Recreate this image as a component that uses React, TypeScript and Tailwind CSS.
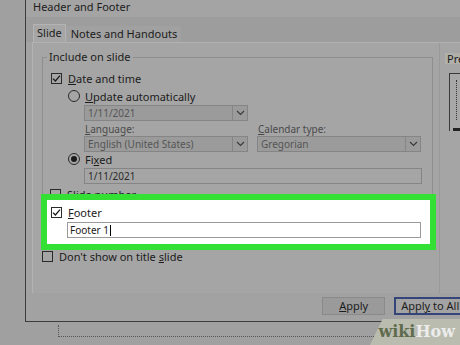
import React from "react";

const font = { fontFamily: '"Noto Sans", "Open Sans", sans-serif' };

function Check({ checked }: { checked?: boolean }) {
  return (
    <div className="w-[11px] h-[11px] border border-[#2a2a2a] bg-transparent flex items-center justify-center shrink-0">
      {checked && (
        <svg width="9" height="9" viewBox="0 0 9 9">
          <path d="M1 4.6 L3.4 7 L8 1.6" stroke="#1a1a1a" strokeWidth="1.3" fill="none" />
        </svg>
      )}
    </div>
  );
}

function Radio({ on }: { on?: boolean }) {
  return (
    <div className="w-[12px] h-[12px] rounded-full border border-[#2a2a2a] flex items-center justify-center shrink-0">
      {on && <div className="w-[6px] h-[6px] rounded-full bg-[#1a1a1a]" />}
    </div>
  );
}

function Chevron() {
  return (
    <svg width="9" height="6" viewBox="0 0 9 6">
      <path d="M1 1 L4.5 4.5 L8 1" stroke="#3a3a3a" strokeWidth="1.2" fill="none" />
    </svg>
  );
}

function Dropdown({ text, w }: { text: string; w: string }) {
  return (
    <div className={`${w} h-[16px] border border-[#858585] bg-[#9b9b9b] flex items-stretch`}>
      <div className="flex-1 pl-[3px] text-[10px] leading-[14px] text-[#555]">{text}</div>
      <div className="w-[15px] border-l border-[#858585] flex items-center justify-center">
        <Chevron />
      </div>
    </div>
  );
}

export default function App() {
  return (
    <div className="w-[460px] h-[345px] bg-[#a0a0a0] overflow-hidden relative text-[#1c1c1c]" style={font}>
      <div className="flex h-[322px]">
        <div className="w-[25px] shrink-0" />
        <div className="flex-1 border-l border-b border-[#3c3c3c] bg-[#a3a3a3] flex flex-col">
          {/* title */}
          <div className="h-[17px] pl-[7px] text-[11px] leading-[13px] text-[#1c1c1c] bg-[#a4a4a4]">Header and Footer</div>
          {/* tabs */}
          <div className="h-[25px] bg-[#9d9d9d] flex items-end pl-[7px]">
            <div className="h-[18px] px-[3px] border border-b-0 border-[#b4b4b4] bg-[#a6a6a6] text-[11px] leading-[16px]">Slide</div>
            <div className="h-[16px] pl-[5px] pr-[4px] text-[11px] leading-[15px] bg-[#a1a1a1]">Notes and Handouts</div>
          </div>
          {/* panel */}
          <div className="h-[251px] ml-[6px] border-l border-t border-[#b2b2b2] bg-[#a5a5a5] flex">
            <div className="w-[407px] pl-[9px] pt-[14px] flex flex-col border-r border-[#999]">
              {/* group box */}
              <div className="w-[391px] border border-[#8e8e8e] relative flex flex-col">
                <div className="absolute left-[4px] top-[-8px] px-[2px] bg-[#a5a5a5] text-[11px] leading-[14px]">Include on slide</div>
                <div className="h-[15px]" />
                <div className="flex items-center h-[11px] ml-[8px] gap-[6px]">
                  <Check checked />
                  <span className="text-[11px] leading-[11px]"><u>D</u>ate and time</span>
                </div>
                <div className="flex items-center h-[12px] mt-[6px] ml-[25px] gap-[5px]">
                  <Radio />
                  <span className="text-[11px] leading-[11px]"><u>U</u>pdate automatically</span>
                </div>
                <div className="ml-[41px] mt-[3px]">
                  <Dropdown text="1/11/2021" w="w-[164px]" />
                </div>
                <div className="ml-[41px] flex gap-[9px] mt-[1px]">
                  <div className="flex flex-col">
                    <span className="text-[10px] leading-[14px] text-[#4a4a4a] pl-[1px]"><u>L</u>anguage:</span>
                    <Dropdown text="English (United States)" w="w-[164px]" />
                  </div>
                  <div className="flex flex-col">
                    <span className="text-[10px] leading-[14px] text-[#4a4a4a] pl-[1px]"><u>C</u>alendar type:</span>
                    <Dropdown text="Gregorian" w="w-[164px]" />
                  </div>
                </div>
                <div className="flex items-center h-[12px] mt-[1px] ml-[25px] gap-[5px]">
                  <Radio on />
                  <span className="text-[11px] leading-[11px]">Fi<u>x</u>ed</span>
                </div>
                <div className="ml-[41px] mt-[3px] w-[338px] h-[16px] border border-[#858585] bg-[#a5a5a5] pl-[3px] text-[10px] leading-[14px] text-[#2a2a2a]">1/11/2021</div>
                <div className="flex items-center h-[11px] mt-[5px] ml-[7px] gap-[6px]">
                  <Check />
                  <span className="text-[11px] leading-[11px]">Slide <u>n</u>umber</span>
                </div>
                {/* highlighted footer */}
                <div className="relative z-10 ml-[-2px] mt-[-6px] mb-[-4px] w-[395px] border-[6px] border-[#33e033] bg-white pt-[7px] pb-[6px]">
                  <div className="flex items-center h-[11px] ml-[4px] gap-[6px]">
                    <Check checked />
                    <span className="text-[11px] leading-[11px]"><u>F</u>ooter</span>
                  </div>
                  <div className="ml-[20px] mt-[4px] w-[354px] h-[16px] border border-[#9a9a9a] bg-white pl-[2px] text-[10px] leading-[14px] text-[#1a1a1a] flex items-center">
                    Footer 1<span className="inline-block w-[1px] h-[11px] bg-black ml-[1px]" />
                  </div>
                </div>
              </div>
              <div className="flex items-center h-[11px] mt-[4px] gap-[6px]">
                <Check />
                <span className="text-[11px] leading-[11px]">Don't show on title <u>s</u>lide</span>
              </div>
            </div>
            {/* preview column */}
            <div className="flex-1 pl-[5px] pt-[10px] flex flex-col">
              <div className="h-[11px] pl-[2px] bg-[#b0b0a8] text-[11px] leading-[11px]">Pre</div>
              <div className="mt-[9px] ml-[4px] h-[58px] border-l border-t border-[#3a3a3a] bg-[#a8a8a8] relative">
                <div className="absolute left-[6px] top-[6px] h-[40px] border-l border-dotted border-[#333]" />
                <div className="absolute left-[3px] bottom-0 right-0 h-[3px] bg-[#222]" />
              </div>
            </div>
          </div>
          {/* buttons */}
          <div className="flex-1 flex justify-end items-start pt-[4px] bg-[#a2a2a2]">
            <div className="w-[63px] h-[18px] border border-[#8a8a8a] bg-[#9a9a9a] text-[11px] leading-[16px] text-center">
              <u>A</u>pply
            </div>
            <div className="ml-[9px] w-[70px] h-[18px] border-2 border-r-0 border-[#34457a] bg-[#a3a3a3] text-[11px] leading-[14px] pl-[5px] whitespace-nowrap">
              Appl<u>y</u> to All
            </div>
          </div>
        </div>
      </div>
      {/* below dialog */}
      <div className="ml-[58px] mt-[3px] w-[330px] h-[12px] border-l border-b border-dotted border-[#555]" />
      {/* watermark */}
      <div
        className="absolute right-0 bottom-0 w-[90px] h-[26px] bg-[#b9bcae] flex items-center justify-end pr-[5px]"
        style={{ clipPath: "polygon(14% 0, 100% 0, 100% 100%, 0 100%)" }}
      >
        <span className="text-[16px] leading-[16px] font-bold" style={{ fontFamily: '"DejaVu Serif", serif' }}>
          <span className="text-[#5f6b4c]">wiki</span>
          <span className="text-[#ececec]">How</span>
        </span>
      </div>
    </div>
  );
}
